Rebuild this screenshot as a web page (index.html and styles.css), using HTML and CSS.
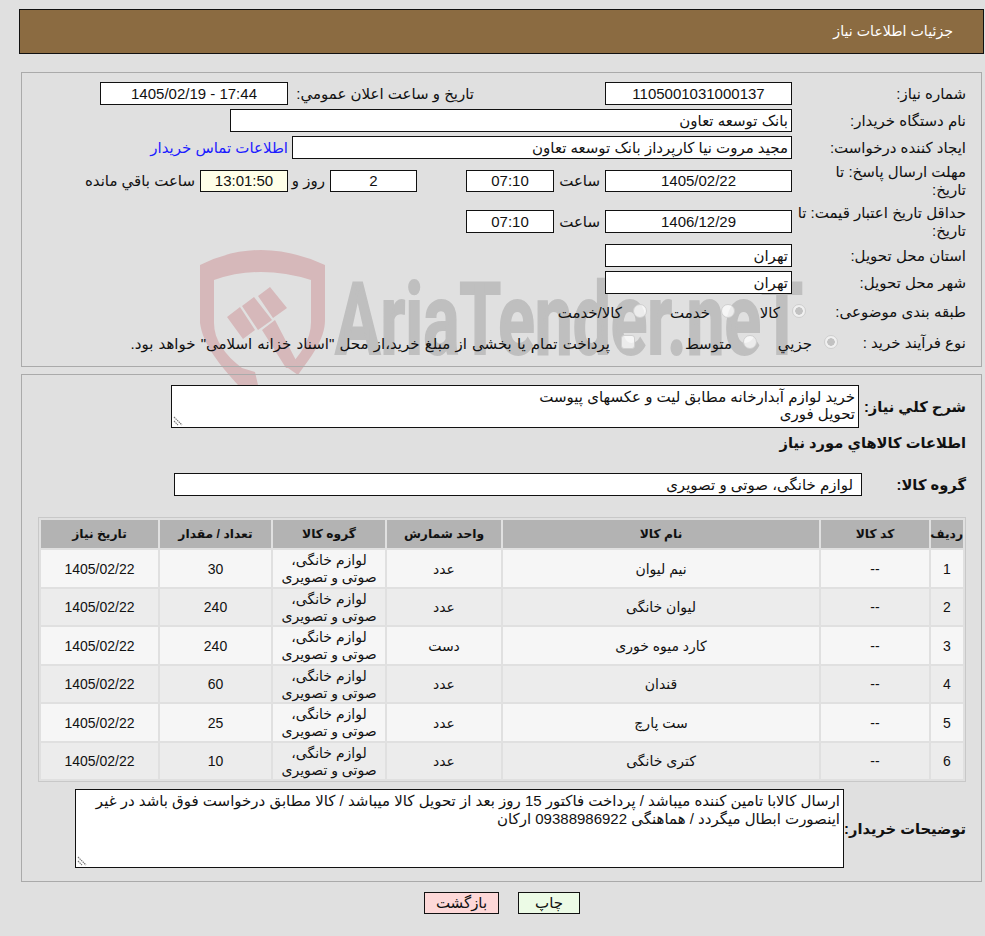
FILE: index.html
```html
<!DOCTYPE html>
<html lang="fa" dir="rtl">
<head>
<meta charset="utf-8">
<title>جزئیات اطلاعات نیاز</title>
<link rel="stylesheet" href="styles.css">
</head>
<body>
<svg class="watermark" viewBox="0 0 640 150" width="640" height="150" aria-hidden="true" dir="ltr">
  <path fill="#d6b8ba" d="M0 15 Q60 -15 125 15 L125 70 C125 90 110 108 98 125 L88 118 C100 105 111 90 111 72 L111 30 Q60 14 14 30 L14 73 C14 90 25 105 42 118 L55 122 L58 135 L38 135 C20 115 3 95 0 73 Z"/>
  <path fill="#d6b8ba" d="M27 67 L40 57 L55 80 L43 89 Z M42 56 L54 47 L72 70 L58 80 Z M58 46 L70 37 L87 58 L73 68 Z M62 80 L75 70 L100 118 L86 118 Z"/>
  <text class="wm-text" x="135" y="104" textLength="468" lengthAdjust="spacingAndGlyphs">AriaTender.neT</text>
</svg>

<header class="title-bar">جزئیات اطلاعات نیاز</header>

<section class="panel panel-top">
  <div class="row">
    <label class="lbl">شماره نیاز:</label>
    <div class="field f-main center">1105001031000137</div>
    <span class="txt announce">تاریخ و ساعت اعلان عمومي:</span>
    <div class="field f-wide center">17:44 - 1405/02/19</div>
  </div>
  <div class="row">
    <label class="lbl">نام دستگاه خریدار:</label>
    <div class="field f-buyer">بانک توسعه تعاون</div>
  </div>
  <div class="row">
    <label class="lbl">ایجاد کننده درخواست:</label>
    <div class="field f-creator">مجید مروت نیا کارپرداز بانک توسعه تعاون</div>
    <a class="contact" href="#">اطلاعات تماس خریدار</a>
  </div>
  <div class="row row-a">
    <label class="lbl lbl-narrow">مهلت ارسال پاسخ: تا تاریخ:</label>
    <div class="field f-main center">1405/02/22</div>
    <span class="txt hour">ساعت</span>
    <div class="field f-time center">07:10</div>
    <div class="field f-days center">2</div>
    <span class="txt days">روز و</span>
    <div class="field f-timer center">13:01:50</div>
    <span class="txt remain">ساعت باقي مانده</span>
  </div>
  <div class="row row-b">
    <label class="lbl">حداقل تاریخ اعتبار قیمت: تا تاریخ:</label>
    <div class="field f-main center">1406/12/29</div>
    <span class="txt hour">ساعت</span>
    <div class="field f-time center">07:10</div>
  </div>
  <div class="row">
    <label class="lbl">استان محل تحویل:</label>
    <div class="field f-main">تهران</div>
  </div>
  <div class="row">
    <label class="lbl">شهر محل تحویل:</label>
    <div class="field f-main">تهران</div>
  </div>
  <div class="row row-r1">
    <label class="lbl lbl-r1">طبقه بندی موضوعی:</label>
    <input class="opt" type="radio" disabled checked><span class="txt opt-t t1">کالا</span>
    <input class="opt" type="radio" disabled><span class="txt opt-t t2">خدمت</span>
    <input class="opt" type="radio" disabled><span class="txt opt-t">کالا/خدمت</span>
  </div>
  <div class="row row-r2">
    <label class="lbl lbl-r2">نوع فرآیند خرید :</label>
    <input class="opt" type="radio" disabled checked><span class="txt opt-t t4">جزيي</span>
    <input class="opt" type="radio" disabled><span class="txt opt-t t5">متوسط</span>
    <input class="opt box" type="checkbox" disabled><span class="txt opt-t treasury">پرداخت تمام یا بخشی از مبلغ خرید،از محل "اسناد خزانه اسلامی" خواهد بود.</span>
  </div>
</section>

<section class="panel panel-main">
  <div class="need-row">
    <label class="blbl need-lbl">شرح كلي نياز:</label>
    <div class="area area-need">خرید لوازم آبدارخانه مطابق لیت و عکسهای پیوست<br>تحویل فوری<svg class="grip" viewBox="0 0 10 10" width="10" height="10"><path d="M1 1l8 8M1 5l4 4" stroke="#777" stroke-width="1.2" stroke-dasharray="1.5 .7" fill="none"/></svg></div>
  </div>
  <h2 class="blbl heading">اطلاعات كالاهاي مورد نياز</h2>
  <div class="group-row">
    <label class="blbl group-lbl">گروه کالا:</label>
    <div class="field f-group">لوازم خانگی، صوتی و تصویری</div>
  </div>
  <table class="goods">
    <colgroup><col class="c1"><col class="c2"><col class="c3"><col class="c4"><col class="c5"><col class="c6"><col class="c7"></colgroup>
    <thead>
      <tr><th>ردیف</th><th>کد کالا</th><th>نام کالا</th><th>واحد شمارش</th><th>گروه کالا</th><th>تعداد / مقدار</th><th>تاریخ نیاز</th></tr>
    </thead>
    <tbody>
      <tr><td>1</td><td>--</td><td>نیم لیوان</td><td>عدد</td><td>لوازم خانگی،<br>صوتی و تصویری</td><td>30</td><td>1405/02/22</td></tr>
      <tr><td>2</td><td>--</td><td>لیوان خانگی</td><td>عدد</td><td>لوازم خانگی،<br>صوتی و تصویری</td><td>240</td><td>1405/02/22</td></tr>
      <tr><td>3</td><td>--</td><td>کارد میوه خوری</td><td>دست</td><td>لوازم خانگی،<br>صوتی و تصویری</td><td>240</td><td>1405/02/22</td></tr>
      <tr><td>4</td><td>--</td><td>قندان</td><td>عدد</td><td>لوازم خانگی،<br>صوتی و تصویری</td><td>60</td><td>1405/02/22</td></tr>
      <tr><td>5</td><td>--</td><td>ست پارچ</td><td>عدد</td><td>لوازم خانگی،<br>صوتی و تصویری</td><td>25</td><td>1405/02/22</td></tr>
      <tr><td>6</td><td>--</td><td>کتری خانگی</td><td>عدد</td><td>لوازم خانگی،<br>صوتی و تصویری</td><td>10</td><td>1405/02/22</td></tr>
    </tbody>
  </table>
  <div class="note-row">
    <label class="blbl note-lbl">توضیحات خریدار:</label>
    <div class="area area-note">ارسال کالابا تامین کننده میباشد / پرداخت فاکتور 15 روز بعد از تحویل کالا میباشد / کالا مطابق درخواست فوق باشد در غیر اینصورت ابطال میگردد / هماهنگی 09388986922 ارکان<svg class="grip" viewBox="0 0 10 10" width="10" height="10"><path d="M1 1l8 8M1 5l4 4" stroke="#777" stroke-width="1.2" stroke-dasharray="1.5 .7" fill="none"/></svg></div>
  </div>
</section>

<div class="actions">
  <button class="btn print" type="button">چاپ</button>
  <button class="btn back" type="button">بازگشت</button>
</div>
</body>
</html>
```
FILE: styles.css
```css
* { box-sizing: border-box; }
html, body { margin: 0; padding: 0; }
body {
  position: relative;
  width: 985px;
  height: 936px;
  overflow: hidden;
  padding: 9px 1px 0 3px;
  background: #e0e0e0;
  font: 15px/18px "Liberation Sans", "DejaVu Sans", sans-serif;
  color: #111;
}
.watermark { position: absolute; left: 200px; top: 250px; direction: ltr; }
.wm-text { font: 700 100px "Roboto", sans-serif; fill: #bfbfbf; stroke: #bfbfbf; stroke-width: 2px; }
.title-bar {
  position: relative;
  height: 45px;
  margin-left: 16px;
  padding-right: 30px;
  font-size: 14.2px;
  line-height: 43px;
  color: #fff;
  background: #8b6b41;
  border: 1px solid #111;
}
.panel { position: relative; border: 1px solid #aaa; margin: 0 2px 0 18px; }
.panel-top { height: 295px; margin-top: 18px; padding: 9px 15px 0 0; display: flex; flex-direction: column; gap: 4px; }
.panel-main { height: 508px; margin-top: 7px; padding: 10px 15px 0 0; }
.row { display: flex; align-items: center; min-height: 23px; }
.row-a { height: 36px; }
.row-b { height: 37px; }
.row-r1 { height: 28px; }
.row-r2 { height: 26px; }
.lbl { width: 174px; flex: none; }
.lbl-narrow { padding-left: 25px; }
.lbl-r1 { width: 160px; }
.lbl-r2 { width: 128px; }
.field {
  flex: none;
  height: 23px;
  padding: 0 3px;
  background: #fff;
  border: 1px solid #111;
  line-height: 21px;
  white-space: nowrap;
}
.row-a .field { height: 22px; line-height: 20px; }
.center { text-align: center; }
.f-main { width: 187px; }
.f-wide { width: 188px; }
.f-buyer { width: 562px; }
.f-creator { width: 500px; }
.f-time { width: 88px; }
.f-days { width: 87px; margin-right: 49px; }
.f-timer { width: 88px; background: #ffffe8; }
.txt { flex: none; white-space: nowrap; }
.announce { margin-right: 131px; width: 186px; }
.contact { margin-right: 4px; color: #1c1cff; text-decoration: none; white-space: nowrap; }
.hour { width: 51px; padding-right: 5px; }
.days { width: 42px; padding-right: 5px; }
.remain { padding-right: 5px; }
.opt {
  appearance: none;
  flex: none;
  width: 14px;
  height: 14px;
  margin: -2px 0 0;
  background: rgba(255, 255, 255, .7);
  border: 1px solid #cfcfcf;
  border-radius: 50%;
}
.opt:checked { background: radial-gradient(circle, #c2c2c2 0 3.5px, #f0f0f0 4px); }
.opt.box { border-radius: 3px; }
.opt-t { padding-right: 11px; padding-top: 2px; }
.t1 { width: 57px; padding-right: 12px; }
.t2 { width: 74px; }
.t4 { width: 67px; padding-right: 12px; }
.t5 { width: 108px; }
.treasury { word-spacing: 1px; }
.blbl { flex: none; font-weight: 700; font-size: 14.7px; margin: 0; white-space: nowrap; }
.need-row { display: flex; align-items: center; height: 43px; }
.need-lbl { width: 107px; }
.area {
  position: relative;
  background: #fff;
  border: 1px solid #111;
  padding: 2px 3px;
}
.area-need { width: 688px; height: 43px; line-height: 17px; }
.grip { position: absolute; left: 1px; bottom: 1px; }
.heading { margin-top: 5px; height: 20px; line-height: 20px; }
.group-row { display: flex; align-items: center; margin-top: 20px; height: 23px; }
.group-lbl { width: 104px; }
.f-group { width: 688px; padding-right: 8px; }
.goods {
  width: 928px;
  margin-top: 21px;
  table-layout: fixed;
  border: 1px solid #c8c8c8;
  border-spacing: 2px;
  font-size: 14px;
  text-align: center;
}
.c1 { width: 32px; } .c2 { width: 108px; } .c3 { width: 316px; } .c4 { width: 114px; }
.c5 { width: 112px; } .c6 { width: 111px; } .c7 { width: 117px; }
.goods th { height: 28px; padding: 0; background: #b3b3b3; font-size: 12.3px; font-weight: 700; }
.goods td { padding: 1px 0 0; line-height: 17px; }
.goods tbody tr:nth-child(odd) td { height: 37px; background: #f6f6f6; }
.goods tbody tr:nth-child(even) td { height: 36px; background: #ececec; }
.note-row { display: flex; align-items: center; margin-top: 7px; height: 79px; }
.note-lbl { width: 122px; }
.area-note { width: 769px; height: 79px; line-height: 18px; }
.actions { display: flex; justify-content: center; gap: 19px; margin-top: 10px; padding-left: 17px; }
.btn {
  height: 22px;
  padding: 0;
  border: 1px solid #111;
  font: 15px/18px "Liberation Sans", "DejaVu Sans", sans-serif;
  color: #111;
}
.back { width: 75px; background: #fdd8d8; }
.print { width: 62px; background: #ecfbe6; }
```
